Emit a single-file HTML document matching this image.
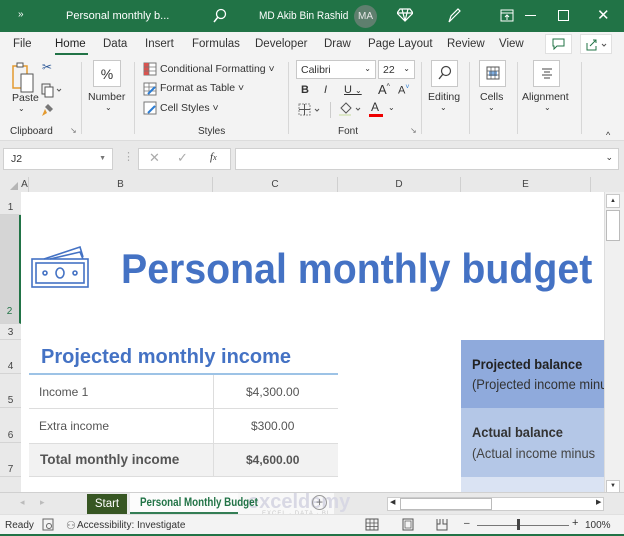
<!DOCTYPE html>
<html><head><meta charset="utf-8"><style>
*{margin:0;padding:0;box-sizing:border-box}
body{width:624px;height:536px;overflow:hidden;background:#f3f3f3;font-family:"Liberation Sans",sans-serif;font-size:11px;color:#333;position:relative}
.a{position:absolute;white-space:nowrap}
.s{transform-origin:0 0}
.rh{position:absolute;left:0;width:21px;text-align:center;font-size:10px;color:#444;border-bottom:1px solid #d4d4d4;background:#e9e9e9}
.ch{position:absolute;top:177px;height:15px;text-align:center;font-size:10px;color:#444;border-right:1px solid #d0d0d0;line-height:15px}
.btn{position:absolute;border:1px solid #c8c8c8;background:#fff}
.sm{font-size:10.5px;color:#333}
</style></head><body>
<!-- title bar -->
<div class="a" style="left:0;top:0;width:624px;height:32px;background:#217346"></div>
<div class="a" style="left:18px;top:9px;color:#fff;font-size:10px">»</div>
<div class="a" style="left:66px;top:10px;color:#fff;font-size:11px">Personal monthly b...</div>
<svg class="a" style="left:212px;top:8px" width="16" height="16"><circle cx="9" cy="6" r="4.5" fill="none" stroke="#fff" stroke-width="1.3"/><path d="M6 9 L2 14" stroke="#fff" stroke-width="1.5"/></svg>
<div class="a s" style="left:259px;top:10px;color:#fff;font-size:11px;transform:scaleX(.92)">MD Akib Bin Rashid</div>
<div class="a" style="left:354px;top:5px;width:23px;height:23px;border-radius:12px;background:#5f7f6e;color:#e8e8e8;font-size:10px;text-align:center;line-height:23px">MA</div>
<svg class="a" style="left:397px;top:8px" width="16" height="14"><path d="M3 1h10l3 4-8 8-8-8z M0 5h16 M5 1l3 12 3-12" fill="none" stroke="#fff" stroke-width="1.2"/></svg>
<svg class="a" style="left:446px;top:7px" width="16" height="16"><path d="M3 15l2-6 7-7 2 2-7 7z" fill="none" stroke="#fff" stroke-width="1.2"/></svg>
<svg class="a" style="left:500px;top:9px" width="14" height="13"><rect x="1" y="1" width="12" height="11" fill="none" stroke="#fff"/><path d="M1 4h12 M7 6v5 M5 8l2-2 2 2" fill="none" stroke="#fff"/></svg>
<div class="a" style="left:525px;top:15px;width:11px;height:1px;background:#fff"></div>
<div class="a" style="left:558px;top:10px;width:11px;height:11px;border:1px solid #fff"></div>
<div class="a" style="left:597px;top:6px;color:#fff;font-size:15px">✕</div>

<!-- menu -->
<div class="a" style="left:0;top:32px;width:624px;height:111px;background:#f3f3f3"></div>
<div class="a" style="left:13px;top:38px;font-size:11.5px">File</div>
<div class="a" style="left:55px;top:38px;font-size:11.5px;color:#222">Home</div>
<div class="a" style="left:55px;top:53px;width:33px;height:2px;background:#217346"></div>
<div class="a" style="left:103px;top:38px;font-size:11.5px">Data</div>
<div class="a" style="left:145px;top:38px;font-size:11.5px">Insert</div>
<div class="a" style="left:192px;top:38px;font-size:11.5px">Formulas</div>
<div class="a" style="left:255px;top:38px;font-size:11.5px">Developer</div>
<div class="a" style="left:324px;top:38px;font-size:11.5px">Draw</div>
<div class="a" style="left:368px;top:38px;font-size:11.5px">Page Layout</div>
<div class="a" style="left:447px;top:38px;font-size:11.5px">Review</div>
<div class="a" style="left:499px;top:38px;font-size:11.5px">View</div>
<div class="btn" style="left:545px;top:34px;width:27px;height:20px;border-color:#e0e0e0"></div>
<svg class="a" style="left:552px;top:38px" width="13" height="12"><path d="M1 1h11v7H5l-3 3V8H1z" fill="none" stroke="#217346"/></svg>
<div class="btn" style="left:580px;top:34px;width:32px;height:20px;border-color:#e0e0e0"></div>
<svg class="a" style="left:585px;top:37px" width="24" height="14"><path d="M2 6v7h9V9 M5 9l6-6 M8 3h3v3" fill="none" stroke="#217346"/><path d="M17 7l2 2 2-2" fill="none" stroke="#555"/></svg>

<!-- ribbon -->
<svg class="a" style="left:11px;top:62px" width="28" height="34"><rect x="2" y="4" width="14" height="22" fill="none" stroke="#e39a2f" stroke-width="1.5"/><rect x="10" y="12" width="12" height="18" fill="#fff" stroke="#555"/><rect x="6" y="1" width="6" height="4" fill="#fff" stroke="#555"/></svg>
<div class="a sm" style="left:12px;top:92px">Paste</div>
<div class="a" style="left:18px;top:104px;font-size:8px">⌄</div>
<div class="a" style="left:42px;top:60px;font-size:12px;color:#2b5797">✂</div>
<svg class="a" style="left:40px;top:82px" width="24" height="16"><rect x="2" y="2" width="8" height="10" fill="none" stroke="#555"/><rect x="5" y="5" width="8" height="10" fill="#fff" stroke="#555"/><path d="M17 7l2 2 2-2" fill="none" stroke="#555"/></svg>
<svg class="a" style="left:40px;top:102px" width="16" height="16"><path d="M8 2l5 5-3 3-5-5z" fill="#777"/><path d="M5 7l-3 7 5-3z" fill="#e39a2f"/></svg>
<div class="a" style="left:10px;top:126px;font-size:10px">Clipboard</div>
<div class="a" style="left:70px;top:126px;font-size:8px;color:#777">↘</div>
<div class="a" style="left:81px;top:62px;width:1px;height:72px;background:#d7d7d7"></div>

<div class="btn" style="left:93px;top:60px;width:28px;height:27px;font-size:14px;text-align:center;line-height:26px">%</div>
<div class="a sm" style="left:88px;top:91px">Number</div>
<div class="a" style="left:105px;top:103px;font-size:8px">⌄</div>
<div class="a" style="left:134px;top:62px;width:1px;height:72px;background:#d7d7d7"></div>

<svg class="a" style="left:143px;top:62px" width="14" height="14"><rect x="1" y="1" width="12" height="12" fill="#fff" stroke="#777"/><rect x="1" y="1" width="5" height="12" fill="#d9534f"/><path d="M1 5h12M1 9h12M6 1v12" stroke="#777" stroke-width=".8"/></svg>
<div class="a sm" style="left:160px;top:63px">Conditional Formatting ˅</div>
<svg class="a" style="left:143px;top:82px" width="14" height="14"><rect x="1" y="1" width="12" height="12" fill="#fff" stroke="#777"/><path d="M1 5h12M1 9h12M6 1v12" stroke="#777" stroke-width=".8"/><path d="M5 12l7-7" stroke="#2b7cd3" stroke-width="2"/></svg>
<div class="a sm" style="left:160px;top:82px">Format as Table ˅</div>
<svg class="a" style="left:143px;top:101px" width="14" height="14"><rect x="1" y="1" width="12" height="12" fill="#fff" stroke="#777"/><path d="M5 12l7-7" stroke="#2b7cd3" stroke-width="2"/></svg>
<div class="a sm" style="left:160px;top:102px">Cell Styles ˅</div>
<div class="a" style="left:198px;top:126px;font-size:10px">Styles</div>
<div class="a" style="left:288px;top:62px;width:1px;height:72px;background:#d7d7d7"></div>

<div class="btn" style="left:296px;top:60px;width:80px;height:19px;font-size:10.5px;padding:3px 4px">Calibri<span style="position:absolute;right:4px;font-size:8px">⌄</span></div>
<div class="btn" style="left:378px;top:60px;width:37px;height:19px;font-size:10.5px;padding:3px 4px">22<span style="position:absolute;right:4px;font-size:8px">⌄</span></div>
<div class="a" style="left:301px;top:84px;font-weight:bold;font-size:11px">B</div>
<div class="a" style="left:324px;top:84px;font-style:italic;font-size:11px">I</div>
<div class="a" style="left:344px;top:84px;text-decoration:underline;font-size:11px">U <span style="font-size:8px">⌄</span></div>
<div class="a" style="left:378px;top:82px;font-size:13px">A<sup style="font-size:7px">^</sup></div>
<div class="a" style="left:398px;top:84px;font-size:11px">A<sup style="font-size:7px;color:#2b7cd3">˅</sup></div>
<svg class="a" style="left:298px;top:103px" width="26" height="14"><rect x="1" y="1" width="11" height="11" fill="none" stroke="#888" stroke-dasharray="2 1"/><path d="M1 6.5h11M6.5 1v11" stroke="#555"/><path d="M17 6l2 2 2-2" fill="none" stroke="#555"/></svg>
<div class="a" style="left:330px;top:102px;width:1px;height:16px;background:#ccc"></div>
<svg class="a" style="left:338px;top:101px" width="26" height="16"><path d="M3 7l5-5 5 5-5 5z" fill="none" stroke="#555"/><rect x="1" y="13" width="12" height="2" fill="#dde8c8"/><path d="M18 7l2 2 2-2" fill="none" stroke="#555"/></svg>
<div class="a" style="left:371px;top:100px;font-size:12px">A</div>
<div class="a" style="left:369px;top:114px;width:14px;height:3px;background:#e00"></div>
<div class="a" style="left:388px;top:103px;font-size:8px">⌄</div>
<div class="a" style="left:338px;top:126px;font-size:10px">Font</div>
<div class="a" style="left:410px;top:126px;font-size:8px;color:#777">↘</div>
<div class="a" style="left:421px;top:62px;width:1px;height:72px;background:#d7d7d7"></div>

<div class="btn" style="left:431px;top:60px;width:27px;height:27px"></div>
<svg class="a" style="left:437px;top:65px" width="16" height="16"><circle cx="9" cy="6" r="4.5" fill="none" stroke="#444" stroke-width="1.2"/><path d="M6 9L2 14" stroke="#444" stroke-width="1.4"/></svg>
<div class="a sm" style="left:428px;top:91px">Editing</div>
<div class="a" style="left:440px;top:103px;font-size:8px">⌄</div>
<div class="a" style="left:469px;top:62px;width:1px;height:72px;background:#d7d7d7"></div>
<div class="btn" style="left:479px;top:60px;width:27px;height:27px"></div>
<svg class="a" style="left:485px;top:65px" width="16" height="16"><rect x="2" y="2" width="12" height="12" fill="none" stroke="#555"/><rect x="4" y="6" width="8" height="5" fill="#2b7cd3" opacity=".6"/><path d="M2 6h12M2 10h12M6 2v12M10 2v12" stroke="#555" stroke-width=".7"/></svg>
<div class="a sm" style="left:480px;top:91px">Cells</div>
<div class="a" style="left:488px;top:103px;font-size:8px">⌄</div>
<div class="a" style="left:517px;top:62px;width:1px;height:72px;background:#d7d7d7"></div>
<div class="btn" style="left:533px;top:60px;width:27px;height:27px"></div>
<svg class="a" style="left:539px;top:66px" width="16" height="16"><path d="M3 3h10M5 6h6M3 9h10M5 12h6" stroke="#444"/></svg>
<div class="a sm" style="left:522px;top:91px">Alignment</div>
<div class="a" style="left:544px;top:103px;font-size:8px">⌄</div>
<div class="a" style="left:581px;top:62px;width:1px;height:72px;background:#d7d7d7"></div>
<div class="a" style="left:606px;top:130px;font-size:9px">^</div>
<div class="a" style="left:0;top:140px;width:624px;height:1px;background:#dcdcdc"></div>

<!-- formula bar -->
<div class="a" style="left:0;top:141px;width:624px;height:36px;background:#e9e9e9"></div>
<div class="btn" style="left:3px;top:148px;width:110px;height:22px;border-color:#d0d0d0;font-size:10.5px;padding:4px 7px">J2<span style="position:absolute;right:6px;font-size:7px;color:#777;top:6px">▼</span></div>
<div class="a" style="left:123px;top:150px;color:#aaa;font-size:11px">⋮</div>
<div class="btn" style="left:138px;top:148px;width:93px;height:22px;border-color:#d0d0d0"></div>
<div class="a" style="left:149px;top:150px;color:#aaa;font-size:13px">✕</div>
<div class="a" style="left:177px;top:150px;color:#aaa;font-size:13px">✓</div>
<div class="a" style="left:210px;top:151px;font-family:'Liberation Serif',serif;font-style:italic;font-size:11px">f<span style="font-size:8px">x</span></div>
<div class="btn" style="left:235px;top:148px;width:384px;height:22px;border-color:#d0d0d0"><span style="position:absolute;right:5px;top:3px;font-size:9px">⌄</span></div>

<!-- headers -->
<div class="a" style="left:0;top:177px;width:624px;height:15px;background:#e9e9e9"></div>
<svg class="a" style="left:9px;top:181px" width="10" height="10"><path d="M9 1v8H1z" fill="#b5b5b5"/></svg>
<div class="ch" style="left:21px;width:8px">A</div>
<div class="ch" style="left:29px;width:184px">B</div>
<div class="ch" style="left:213px;width:125px">C</div>
<div class="ch" style="left:338px;width:123px">D</div>
<div class="ch" style="left:461px;width:130px">E</div>
<div class="a" style="left:0;top:192px;width:21px;height:300px;background:#e9e9e9"></div>
<div class="rh" style="top:192px;height:23px;padding-top:10px">1</div>
<div class="rh" style="top:215px;height:109px;padding-top:91px;background:#d5d5d5;color:#217346;border-right:2px solid #217346">2</div>
<div class="rh" style="top:324px;height:16px;padding-top:3px">3</div>
<div class="rh" style="top:340px;height:34px;padding-top:21px">4</div>
<div class="rh" style="top:374px;height:34px;padding-top:21px">5</div>
<div class="rh" style="top:408px;height:35px;padding-top:22px">6</div>
<div class="rh" style="top:443px;height:34px;padding-top:21px">7</div>
<div class="rh" style="top:477px;height:15px;border-bottom:none"></div>

<!-- sheet -->
<div class="a" style="left:21px;top:192px;width:583px;height:300px;background:#fff"></div>
<svg class="a" style="left:30px;top:245px" width="60" height="44"><g fill="none" stroke="#4472c4" stroke-width="1.6"><path d="M14 14L50 2l3 10"/><path d="M20 14l30-7 3 7"/><rect x="2" y="14" width="56" height="28"/><rect x="6" y="18" width="48" height="20"/><ellipse cx="30" cy="28" rx="4" ry="5"/><circle cx="15" cy="28" r="2"/><circle cx="45" cy="28" r="2"/></g></svg>
<div class="a s" style="left:121px;top:245px;font-size:42px;font-weight:bold;color:#4472c4;transform:scaleX(.935)">Personal monthly budget</div>

<div class="a" style="left:41px;top:346px;font-size:20px;font-weight:bold;color:#4472c4">Projected monthly income</div>
<div class="a" style="left:29px;top:373px;width:309px;height:2px;background:#9dc3e6"></div>
<div class="a" style="left:213px;top:375px;width:1px;height:102px;background:#ddd"></div>
<div class="a" style="left:29px;top:408px;width:309px;height:1px;background:#ddd"></div>
<div class="a" style="left:29px;top:443px;width:309px;height:34px;background:#f2f2f2;border-top:1px solid #ddd;border-bottom:1px solid #ddd"></div>
<div class="a" style="left:213px;top:443px;width:1px;height:34px;background:#ddd"></div>
<div class="a" style="left:39px;top:385px;font-size:12px;color:#555">Income 1</div>
<div class="a" style="left:246px;top:385px;font-size:12px;color:#555">$4,300.00</div>
<div class="a" style="left:39px;top:419px;font-size:12px;color:#555">Extra income</div>
<div class="a" style="left:251px;top:419px;font-size:12px;color:#555">$300.00</div>
<div class="a s" style="left:40px;top:451px;font-size:14px;font-weight:bold;color:#555;transform:scaleX(.97)">Total monthly income</div>
<div class="a" style="left:246px;top:453px;font-size:12px;font-weight:bold;color:#555">$4,600.00</div>

<div class="a" style="left:461px;top:340px;width:143px;height:68px;background:#8faadc;overflow:hidden">
<div class="s" style="position:absolute;left:11px;top:16px;font-size:14px;font-weight:bold;color:#222;transform:scaleX(.92)">Projected balance</div>
<div class="s" style="position:absolute;left:11px;top:36px;font-size:14px;color:#333;transform:scaleX(.92)">(Projected income minus</div></div>
<div class="a" style="left:461px;top:408px;width:143px;height:69px;background:#b4c7e7;overflow:hidden">
<div class="s" style="position:absolute;left:11px;top:16px;font-size:14px;font-weight:bold;color:#333;transform:scaleX(.92)">Actual balance</div>
<div class="s" style="position:absolute;left:11px;top:37px;font-size:14px;color:#444;transform:scaleX(.92)">(Actual income minus</div></div>
<div class="a" style="left:461px;top:477px;width:143px;height:15px;background:#dae3f3"></div>

<!-- vertical scrollbar -->
<div class="a" style="left:604px;top:192px;width:20px;height:300px;background:#f0f0f0;border-left:1px solid #ddd"></div>
<div class="btn" style="left:606px;top:194px;width:14px;height:14px;font-size:6px;text-align:center;line-height:12px">▲</div>
<div class="btn" style="left:606px;top:210px;width:14px;height:31px;border-color:#bbb"></div>
<div class="btn" style="left:606px;top:480px;width:14px;height:13px;font-size:6px;text-align:center;line-height:11px">▼</div>

<!-- tabs -->
<div class="a" style="left:0;top:492px;width:624px;height:22px;background:#e9e9e9;border-top:1px solid #d0d0d0"></div>
<div class="a" style="left:20px;top:497px;color:#bbb;font-size:9px">◂</div>
<div class="a" style="left:40px;top:497px;color:#bbb;font-size:9px">▸</div>
<div class="a" style="left:87px;top:494px;width:40px;height:20px;background:#375623;color:#fff;font-size:11.5px;text-align:center;line-height:20px">Start</div>
<div class="a" style="left:238px;top:493px;width:96px;height:21px;background:#f8f8f8"></div>
<div class="a" style="left:248px;top:491px;font-size:20px;font-weight:bold;color:#d8d8e4">exceldemy</div>
<div class="a" style="left:262px;top:511px;font-size:6px;color:#c8c8c8;letter-spacing:1px">EXCEL · DATA · BI</div>
<div class="a" style="left:130px;top:493px;width:108px;height:21px;background:#fff;border-bottom:2px solid #217346;opacity:.9"></div>
<div class="a s" style="left:140px;top:497px;font-size:11.5px;font-weight:bold;color:#217346;transform:scaleX(.85)">Personal Monthly Budget</div>
<div class="a" style="left:312px;top:495px;width:15px;height:15px;border:1px solid #999;border-radius:8px;color:#777;font-size:12px;text-align:center;line-height:13px">+</div>
<div class="btn" style="left:387px;top:497px;width:217px;height:14px;border-color:#ccc"></div>
<div class="a" style="left:390px;top:498px;font-size:7px">◀</div>
<div class="btn" style="left:400px;top:498px;width:92px;height:12px;border-color:#bbb"></div>
<div class="a" style="left:596px;top:498px;font-size:7px">▶</div>

<!-- status -->
<div class="a" style="left:0;top:514px;width:624px;height:22px;background:#f3f3f3;border-top:1px solid #e0e0e0"></div>
<div class="a" style="left:5px;top:520px;font-size:10px">Ready</div>
<svg class="a" style="left:42px;top:518px" width="12" height="13"><rect x="1" y="1" width="10" height="11" fill="none" stroke="#666"/><circle cx="7" cy="8" r="2.5" fill="none" stroke="#666"/></svg>
<div class="a" style="left:66px;top:519px;font-size:11px;color:#666">⚇</div>
<div class="a" style="left:77px;top:520px;font-size:10px">Accessibility: Investigate</div>
<svg class="a" style="left:365px;top:518px" width="14" height="13"><rect x="1" y="1" width="12" height="11" fill="none" stroke="#555"/><path d="M1 5h12M1 8.5h12M5 1v11M9 1v11" stroke="#555" stroke-width=".8"/></svg>
<svg class="a" style="left:402px;top:518px" width="12" height="13"><rect x="1" y="1" width="10" height="11" fill="none" stroke="#555"/><rect x="3" y="3" width="6" height="7" fill="none" stroke="#555" stroke-width=".7"/></svg>
<svg class="a" style="left:436px;top:518px" width="12" height="13"><path d="M1 1v11h10V1 M1 6h3V1 M11 6H7V1" fill="none" stroke="#555"/></svg>
<div class="a" style="left:464px;top:518px;font-size:10px">–</div>
<div class="a" style="left:477px;top:525px;width:92px;height:1px;background:#777"></div>
<div class="a" style="left:517px;top:519px;width:3px;height:11px;background:#444"></div>
<div class="a" style="left:572px;top:517px;font-size:11px">+</div>
<div class="a" style="left:585px;top:520px;font-size:10px">100%</div>
<div class="a" style="left:0;top:534px;width:624px;height:2px;background:#217346"></div>
</body></html>
